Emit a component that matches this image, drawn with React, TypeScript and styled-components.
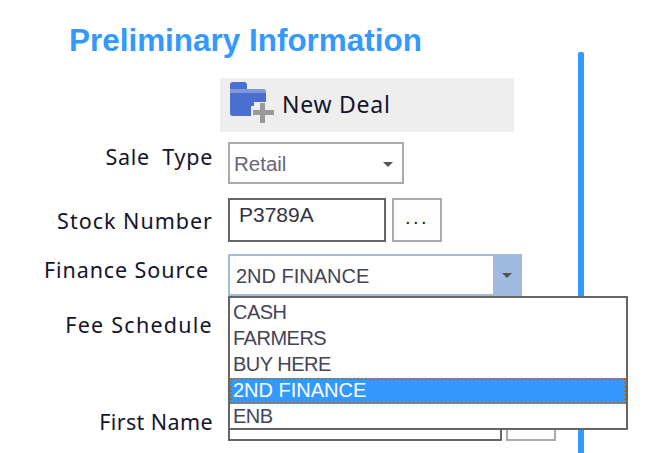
import React from 'react';
import styled, { createGlobalStyle } from 'styled-components';

const GlobalStyle = createGlobalStyle`
    html, body {
        margin: 0;
        padding: 0;
        background: #fff;
    }
    body {
        width: 652px;
        height: 453px;
        overflow: hidden;
    }
`;

const Page = styled.div`
    display: flex;
    width: 652px;
    height: 453px;
    overflow: hidden;
`;

const Panel = styled.div`
    width: 578px;
    flex: none;
`;

const Divider = styled.div`
    width: 6px;
    height: 401px;
    margin-top: 52px;
    background: #3399ff;
    border-radius: 2px 2px 0 0;
`;

const Heading = styled.h1`
    margin: 22px 0 0 69px;
    height: 38px;
    font: bold 31.45px/37px 'Liberation Sans', Arial, sans-serif;
    color: #3399ff;
    white-space: nowrap;
`;

const Toolbar = styled.div`
    display: flex;
    align-items: flex-start;
    gap: 8px;
    width: 294px;
    height: 54px;
    box-sizing: border-box;
    margin: 18px 0 0 220px;
    padding: 4px 0 0 10px;
    background: #eeeeee;
`;

const ToolbarLabel = styled.span`
    font: 23px/44px 'Noto Sans', 'DejaVu Sans', sans-serif;
    letter-spacing: 0.75px;
    color: #14142a;
`;

const Row = styled.div<{ $top: number; $height: number }>`
    display: flex;
    align-items: flex-start;
    gap: 15px;
    height: ${(p) => p.$height}px;
    margin-top: ${(p) => p.$top}px;
`;

const Label = styled.label<{ $shift: number; $spacing: number; $right?: number }>`
    flex: none;
    box-sizing: border-box;
    width: 213px;
    padding-right: ${(p) => p.$right || 0}px;
    padding-top: ${(p) => p.$shift}px;
    text-align: right;
    font: 21.5px/28px 'Noto Sans', 'DejaVu Sans', sans-serif;
    letter-spacing: ${(p) => p.$spacing}px;
    color: #14142a;
    white-space: pre;
`;

const Fields = styled.div<{ $gap?: number }>`
    display: flex;
    gap: ${(p) => p.$gap ?? 6}px;
`;

const Select = styled.div`
    display: flex;
    align-items: center;
    justify-content: space-between;
    box-sizing: border-box;
    width: 176px;
    height: 42px;
    padding: 2px 9px 0 4px;
    border: 2px solid #aaaaaa;
    background: #fff;
    font: 20.5px 'Liberation Sans', Arial, sans-serif;
    color: #666677;
`;

const Caret = styled.span`
    width: 0;
    height: 0;
    border-left: 5px solid transparent;
    border-right: 5px solid transparent;
    border-top: 5px solid #555;
`;

const Input = styled.div<{ $width: number }>`
    box-sizing: border-box;
    width: ${(p) => p.$width}px;
    height: 44px;
    padding: 1px 0 0 9px;
    border: 2px solid #666666;
    background: #fff;
    font: 21px/28px 'Liberation Sans', Arial, sans-serif;
    color: #333344;
`;

const MoreButton = styled.div`
    box-sizing: border-box;
    width: 50px;
    height: 44px;
    padding-top: 3px;
    border: 2px solid #aaaaaa;
    background: #fdfdfd;
    text-align: center;
    font: 20px/28px 'Liberation Sans', Arial, sans-serif;
    letter-spacing: 2.5px;
    color: #222244;
`;

const Combo = styled.div`
    display: flex;
    box-sizing: border-box;
    width: 294px;
    height: 42px;
    border: 2px solid #a0bbdf;
    background: #fff;
`;

const ComboValue = styled.div`
    flex: 1;
    padding-left: 6px;
    font: 20px/41px 'Liberation Sans', Arial, sans-serif;
    color: #444455;
`;

const ComboButton = styled.div`
    display: flex;
    align-items: center;
    justify-content: center;
    width: 27px;
    background: #a0bbdf;
`;

const DropList = styled.ul`
    position: absolute;
    left: 228px;
    top: 296px;
    width: 400px;
    height: 134px;
    box-sizing: border-box;
    margin: 0;
    padding: 2px 0 0;
    list-style: none;
    border: 2px solid #666666;
    background: #fff;
`;

const DropItem = styled.li<{ $active?: boolean }>`
    box-sizing: border-box;
    height: 26px;
    padding-left: 3px;
    font: 20px/24px 'Liberation Sans', Arial, sans-serif;
    letter-spacing: ${(p) => (p.$active ? 0 : -0.5)}px;
    color: ${(p) => (p.$active ? '#ffffff' : '#444455')};
    background: ${(p) => (p.$active ? '#3399ff' : 'transparent')};
    outline: ${(p) => (p.$active ? '2px dotted #c8640f' : 'none')};
    outline-offset: -2px;
`;

const FolderIcon = () => (
    <svg width="44" height="44" viewBox="0 0 44 44">
        <path d="M0 3q0-3 3-3h11q3 0 3 3v4H0z" fill="#4a70cf" />
        <path d="M0 7h34q2 0 2 2v2H0z" fill="#8199dc" />
        <path d="M0 11h36v9H24v4h-3v10H3q-3 0-3-3z" fill="#4a6fd0" />
        <path d="M30 21h5v7h9v5h-9v8h-5v-8h-7v-5h7z" fill="#9a9a9a" />
    </svg>
);

const financeOptions = ['CASH', 'FARMERS', 'BUY HERE', '2ND FINANCE', 'ENB'];

export default function App() {
    return (
        <Page>
            <GlobalStyle />
            <Panel>
                <Heading>Preliminary Information</Heading>
                <Toolbar>
                    <FolderIcon />
                    <ToolbarLabel>New Deal</ToolbarLabel>
                </Toolbar>
                <Row $top={10} $height={42}>
                    <Label $shift={1} $spacing={0.7}>{'Sale  Type'}</Label>
                    <Fields>
                        <Select>
                            Retail
                            <Caret />
                        </Select>
                    </Fields>
                </Row>
                <Row $top={14} $height={44}>
                    <Label $shift={9} $spacing={1}>Stock Number</Label>
                    <Fields>
                        <Input $width={158}>P3789A</Input>
                        <MoreButton>...</MoreButton>
                    </Fields>
                </Row>
                <Row $top={12} $height={42}>
                    <Label $shift={2} $spacing={0.9} $right={4}>Finance Source</Label>
                    <Fields>
                        <Combo>
                            <ComboValue>2ND FINANCE</ComboValue>
                            <ComboButton>
                                <Caret />
                            </ComboButton>
                        </Combo>
                    </Fields>
                </Row>
                <Row $top={12} $height={42}>
                    <Label $shift={3} $spacing={1.25}>Fee Schedule</Label>
                </Row>
                <Row $top={47} $height={44}>
                    <Label $shift={11} $spacing={0.4}>First Name</Label>
                    <Fields $gap={4}>
                        <Input $width={274} />
                        <MoreButton />
                    </Fields>
                </Row>
            </Panel>
            <Divider />
            <DropList>
                {financeOptions.map((option) => (
                    <DropItem key={option} $active={option === '2ND FINANCE'}>
                        {option}
                    </DropItem>
                ))}
            </DropList>
        </Page>
    );
}
